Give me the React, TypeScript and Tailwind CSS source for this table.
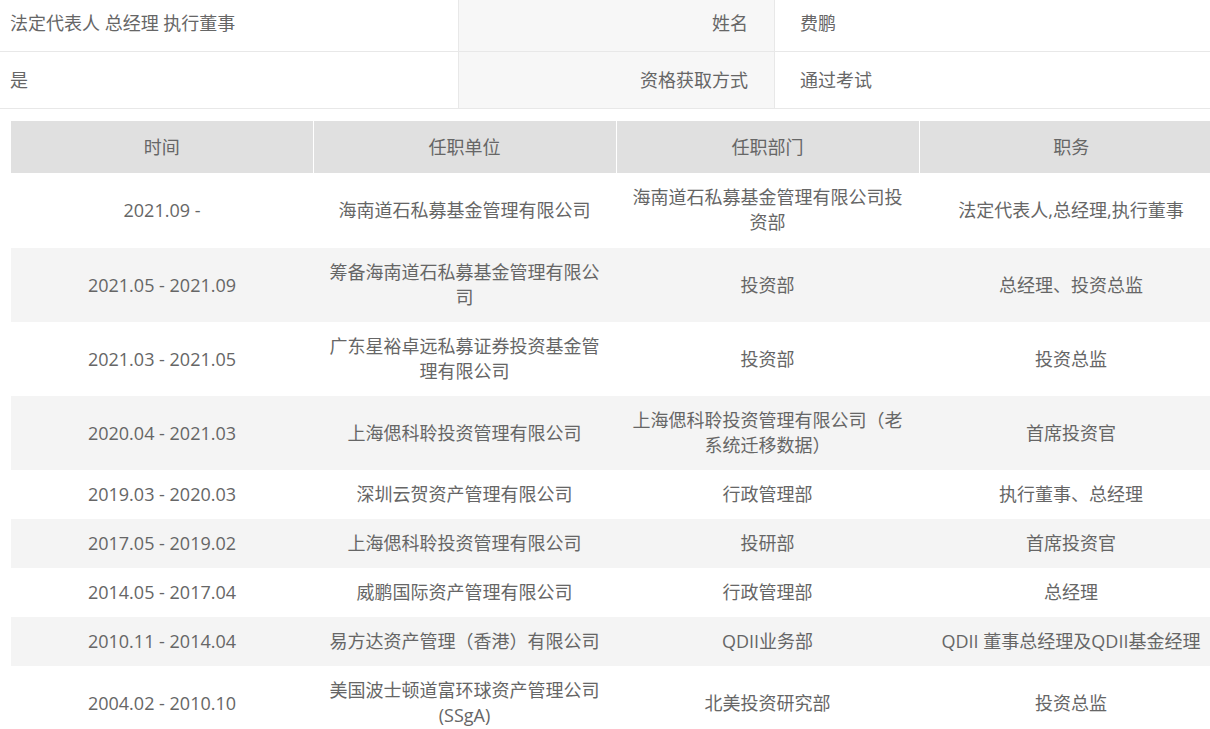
import { FC } from 'react'

const FONT = { fontFamily: '"Open Sans", "Noto Sans CJK SC", sans-serif' }

const INFO = [
  { left: '法定代表人 总经理 执行董事', label: '姓名', value: '费鹏' },
  { left: '是', label: '资格获取方式', value: '通过考试' },
]

const HISTORY = [
  { time: '2021.09 -', company: '海南道石私募基金管理有限公司', dept: '海南道石私募基金管理有限公司投资部', title: '法定代表人,总经理,执行董事' },
  { time: '2021.05 - 2021.09', company: '筹备海南道石私募基金管理有限公司', dept: '投资部', title: '总经理、投资总监' },
  { time: '2021.03 - 2021.05', company: '广东星裕卓远私募证券投资基金管理有限公司', dept: '投资部', title: '投资总监' },
  { time: '2020.04 - 2021.03', company: '上海偲科聆投资管理有限公司', dept: '上海偲科聆投资管理有限公司（老系统迁移数据）', title: '首席投资官' },
  { time: '2019.03 - 2020.03', company: '深圳云贺资产管理有限公司', dept: '行政管理部', title: '执行董事、总经理' },
  { time: '2017.05 - 2019.02', company: '上海偲科聆投资管理有限公司', dept: '投研部', title: '首席投资官' },
  { time: '2014.05 - 2017.04', company: '威鹏国际资产管理有限公司', dept: '行政管理部', title: '总经理' },
  { time: '2010.11 - 2014.04', company: '易方达资产管理（香港）有限公司', dept: 'QDII业务部', title: 'QDII 董事总经理及QDII基金经理' },
  { time: '2004.02 - 2010.10', company: '美国波士顿道富环球资产管理公司(SSgA)', dept: '北美投资研究部', title: '投资总监' },
]

const App: FC = () => {
  return (
    <div className="h-screen w-full overflow-hidden bg-white text-[#666] text-[18px]" style={FONT}>
      <div className="w-[1223px] -mt-[5px]">
        {/* basic info */}
        <div>
          {INFO.map((r, i) => (
            <div key={i} className="flex h-[57px] border-b border-[#e8e8e8]">
              <div className="w-[459px] shrink-0 flex items-center pl-[10px] border-r border-[#e8e8e8]">{r.left}</div>
              <div className="w-[316px] shrink-0 flex items-center justify-end pr-[26px] bg-[#f7f7f7] border-r border-[#e8e8e8]">{r.label}</div>
              <div className="flex-1 flex items-center pl-[25px]">{r.value}</div>
            </div>
          ))}
        </div>

        {/* employment history */}
        <table className="mt-3 ml-[11px] w-[1212px] table-fixed border-collapse leading-[25px]">
          <colgroup>
            <col className="w-[302px]" />
            <col className="w-[303px]" />
            <col className="w-[303px]" />
            <col className="w-[304px]" />
          </colgroup>
          <thead>
            <tr className="h-[52px] bg-[#e0e0e0]">
              {['时间', '任职单位', '任职部门', '职务'].map((h, i) => (
                <th key={h} className={`font-normal text-center px-[10px] ${i > 0 ? 'border-l border-white' : ''}`}>{h}</th>
              ))}
            </tr>
          </thead>
          <tbody>
            {HISTORY.map((row, i) => {
              const cell = i === 0 ? 'text-center pt-3 pb-[13px] px-[10px]' : 'text-center py-3 px-[10px]'
              return (
                <tr key={i} className={i % 2 === 1 ? 'bg-[#f4f4f4]' : 'bg-white'}>
                  <td className={cell}>{row.time}</td>
                  <td className={cell}>{row.company}</td>
                  <td className={cell}>{row.dept}</td>
                  <td className={cell}>{row.title}</td>
                </tr>
              )
            })}
          </tbody>
        </table>
      </div>
    </div>
  )
}

export default App
